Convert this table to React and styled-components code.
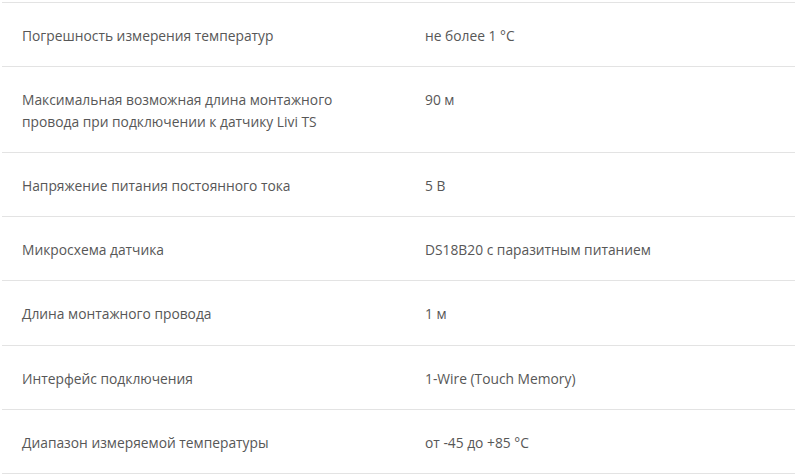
import React from "react";
import styled, { createGlobalStyle } from "styled-components";

const Global = createGlobalStyle`
  html, body { margin: 0; padding: 0; background: #fff; }
  body { font-family: "Open Sans", "Liberation Sans", sans-serif; }
`;

const Page = styled.div`
  padding: 2px 2px 0 2px;
`;

const Table = styled.div`
  display: flex;
  flex-direction: column;
  border-top: 1px solid #e3e3e3;
`;

const Row = styled.div`
  display: grid;
  grid-template-columns: 403px 1fr;
  border-bottom: 1px solid #e3e3e3;
`;

const Cell = styled.div`
  padding: 22px 20px 20px 20px;
  font-size: 13.8px;
  line-height: 21.3px;
  color: #575757;
  max-width: ${(p) => (p.$narrow ? "330px" : "none")};
`;

const rows = [
  ["Погрешность измерения температур", "не более 1 °C"],
  ["Максимальная возможная длина монтажного провода при подключении к датчику Livi TS", "90 м"],
  ["Напряжение питания постоянного тока", "5 В"],
  ["Микросхема датчика", "DS18B20 с паразитным питанием"],
  ["Длина монтажного провода", "1 м"],
  ["Интерфейс подключения", "1-Wire (Touch Memory)"],
  ["Диапазон измеряемой температуры", "от -45 до +85 °C"],
];

export default function App() {
  return (
    <Page>
      <Global />
      <Table>
        {rows.map(([k, v]) => (
          <Row key={k}>
            <Cell $narrow>{k}</Cell>
            <Cell>{v}</Cell>
          </Row>
        ))}
      </Table>
    </Page>
  );
}
